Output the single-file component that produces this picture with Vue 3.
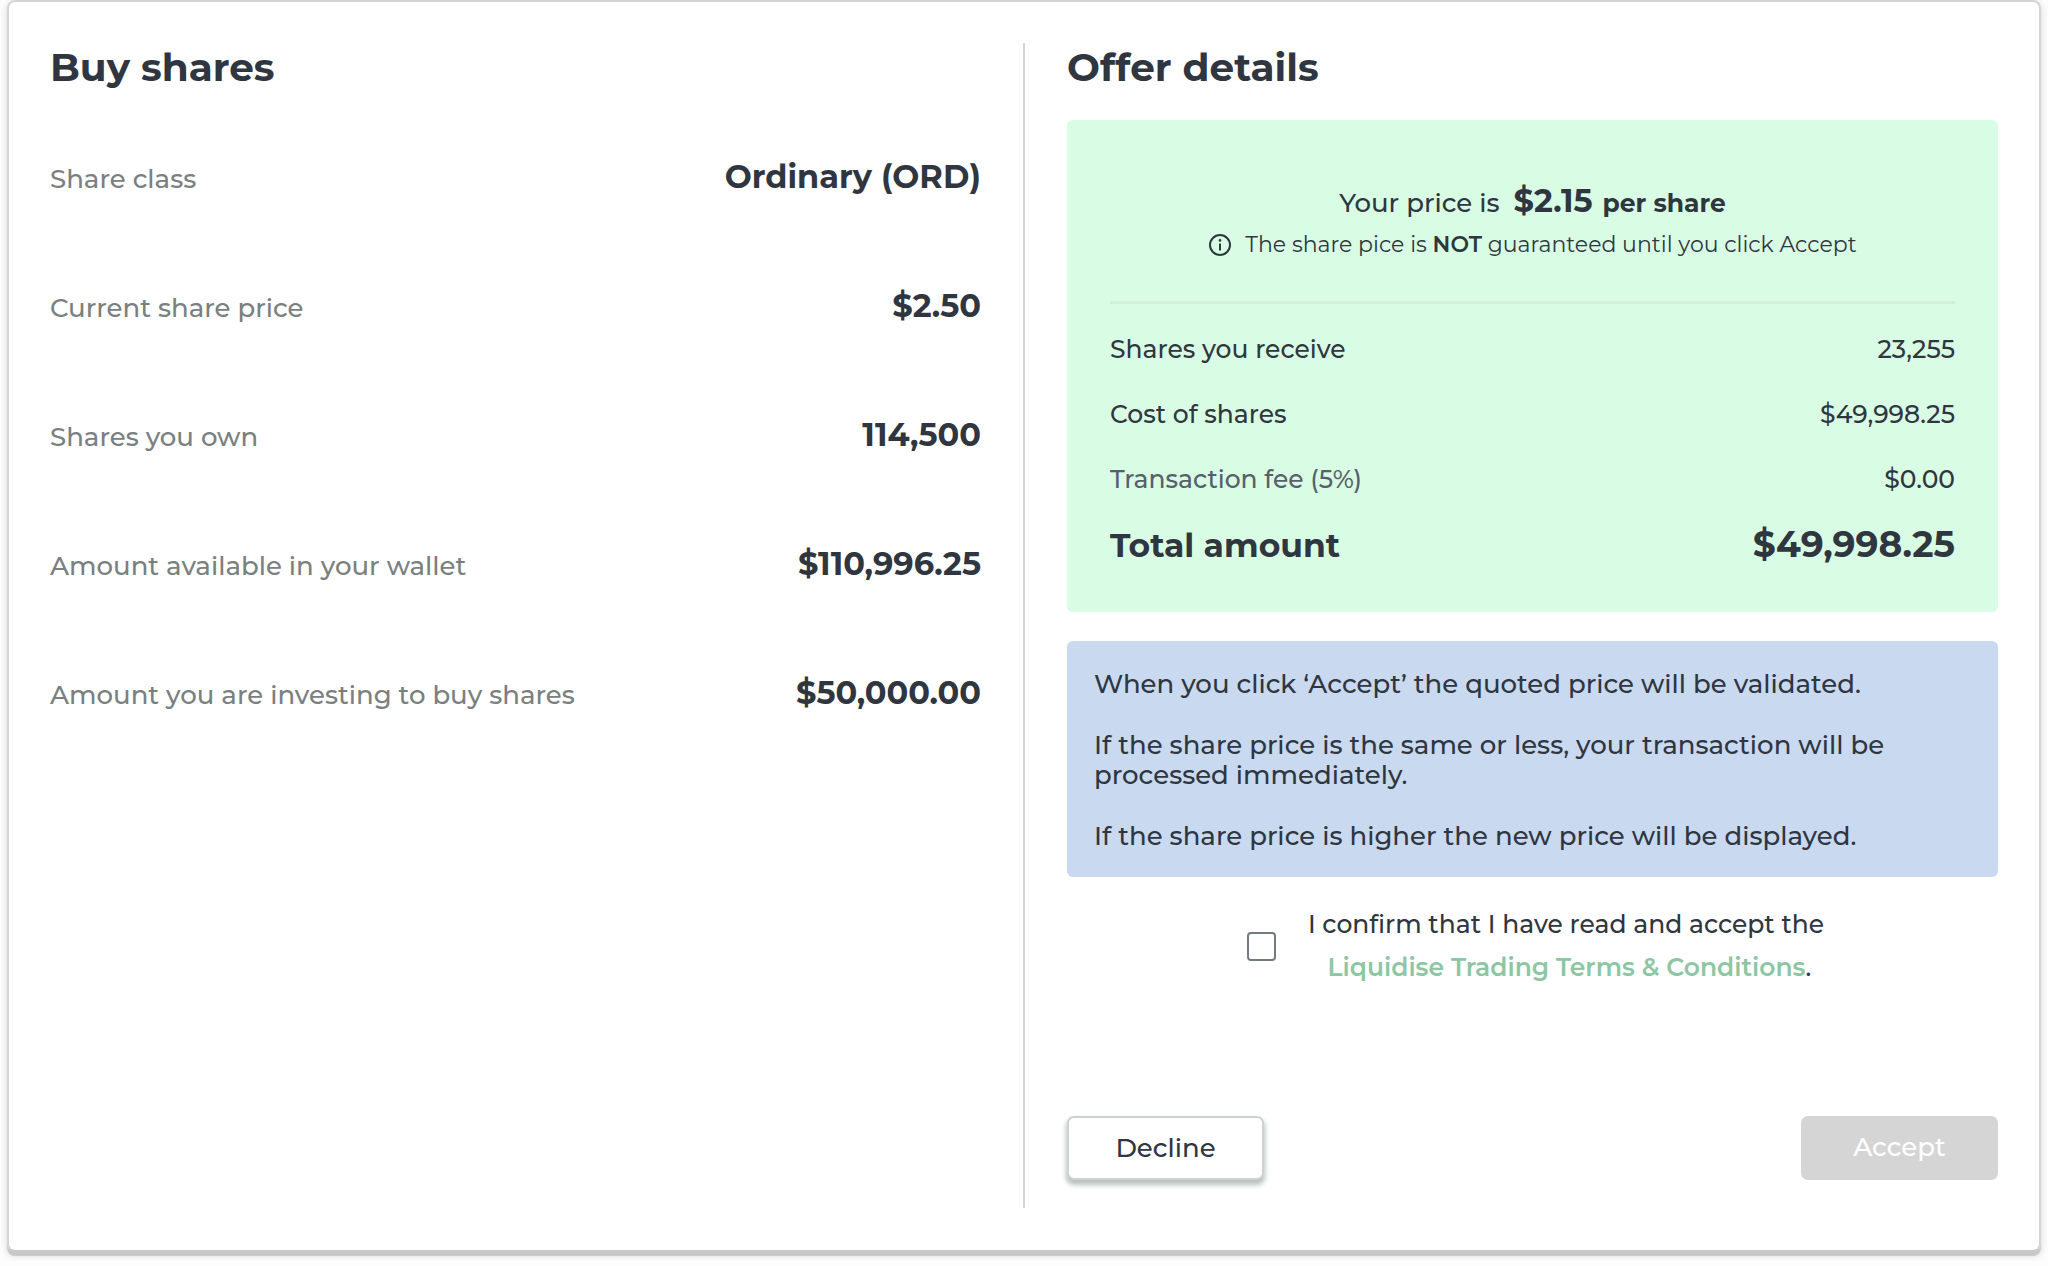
<script setup>
import { ref } from 'vue'

const accepted = ref(false)

const holdings = [
  { label: 'Share class', value: 'Ordinary (ORD)' },
  { label: 'Current share price', value: '$2.50' },
  { label: 'Shares you own', value: '114,500' },
  { label: 'Amount available in your wallet', value: '$110,996.25' },
  { label: 'Amount you are investing to buy shares', value: '$50,000.00' },
]

const quote = [
  { label: 'Shares you receive', value: '23,255' },
  { label: 'Cost of shares', value: '$49,998.25' },
  { label: 'Transaction fee (5%)', value: '$0.00', muted: true },
  { label: 'Total amount', value: '$49,998.25', total: true },
]
</script>

<template>
  <main class="card">
    <section class="column">
      <h1 class="title">Buy shares</h1>
      <dl class="holdings">
        <div v-for="item in holdings" :key="item.label" class="holding">
          <dt>{{ item.label }}</dt>
          <dd>{{ item.value }}</dd>
        </div>
      </dl>
    </section>

    <div class="divider"></div>

    <section class="column offer">
      <h2 class="title">Offer details</h2>

      <div class="quote">
        <p class="price">
          <span class="lead">Your price is</span>
          <strong class="amount">$2.15</strong>
          <strong class="unit">per share</strong>
        </p>
        <p class="note">
          <svg class="info" viewBox="0 0 24 24" aria-hidden="true">
            <circle cx="12" cy="12" r="10" fill="none" stroke="currentColor" stroke-width="2" />
            <path d="M12 10.5v7" fill="none" stroke="currentColor" stroke-width="2" />
            <circle cx="12" cy="7.4" r="1.3" fill="currentColor" />
          </svg>
          <span>The share pice is <b>NOT</b> guaranteed until you click Accept</span>
        </p>
        <dl class="lines">
          <div
            v-for="line in quote"
            :key="line.label"
            class="line"
            :class="{ muted: line.muted, total: line.total }"
          >
            <dt>{{ line.label }}</dt>
            <dd>{{ line.value }}</dd>
          </div>
        </dl>
      </div>

      <div class="notice">
        <p>When you click ‘Accept’ the quoted price will be validated.</p>
        <p>If the share price is the same or less, your transaction will be processed immediately.</p>
        <p>If the share price is higher the new price will be displayed.</p>
      </div>

      <div class="confirm">
        <input id="terms" v-model="accepted" type="checkbox" />
        <label for="terms">
          I confirm that I have read and accept the<br />
          &nbsp;<a href="#terms">Liquidise Trading Terms &amp; Conditions</a>.
        </label>
      </div>

      <div class="actions">
        <button type="button" class="decline">Decline</button>
        <button type="button" class="accept" :disabled="!accepted">Accept</button>
      </div>
    </section>
  </main>
</template>

<style>
body {
  margin: 0;
  background: #fdfdfd;
}
</style>

<style scoped>
.card {
  display: grid;
  grid-template-columns: 1fr 2px 1fr;
  column-gap: 42px;
  margin: 0 7px 12px;
  padding: 41px 41px 42px;
  border: 2px solid #d5d5d5;
  border-bottom-color: #c8c8c8;
  border-radius: 8px;
  background: #fff;
  box-shadow: 0 4px 1px #c8c8c8, 0 3px 5px 3px #ececec;
  color: #2f3640;
  font-family: Montserrat, Inter, "Open Sans", sans-serif;
  font-size: 26px;
  font-weight: 500;
}

.title {
  margin: 0;
  font-size: 39px;
  line-height: 48px;
  font-weight: 700;
}

.divider {
  background: #d5d5d5;
}

dl,
dd,
p {
  margin: 0;
}

.holdings {
  display: flex;
  flex-direction: column;
  gap: 89px;
  margin-top: 66px;
}

.holding,
.line {
  display: flex;
  align-items: baseline;
  justify-content: space-between;
}

.holding {
  height: 40px;
  line-height: 40px;
}

.holding dt {
  color: #7a8080;
}

.holding dd {
  font-size: 32px;
  font-weight: 700;
}

.offer {
  padding-bottom: 28px;
}

.quote {
  margin-top: 29px;
  padding: 60px 43px 35px;
  border-radius: 6px;
  background: #d9fde4;
}

.price {
  display: flex;
  align-items: baseline;
  justify-content: center;
  height: 42px;
  line-height: 42px;
}

.amount {
  margin: 0 10px 0 14px;
  font-size: 32px;
  font-weight: 700;
}

.unit {
  font-size: 25px;
  font-weight: 700;
}

.note {
  display: flex;
  align-items: center;
  justify-content: center;
  gap: 13px;
  padding-bottom: 34px;
  border-bottom: 3px solid #d3efdc;
  font-size: 22px;
  line-height: 45px;
  font-weight: 400;
}

.note b {
  font-weight: 600;
}

.info {
  width: 24px;
  height: 24px;
}

.lines {
  padding-top: 13px;
  font-size: 25px;
}

.line {
  height: 65px;
  line-height: 65px;
}

.muted dt {
  color: #56606a;
}

.total {
  font-size: 33px;
  font-weight: 700;
}

.total dd {
  font-size: 36px;
}

.notice {
  display: flex;
  flex-direction: column;
  gap: 31px;
  margin-top: 29px;
  padding: 28px 27px 26px;
  border-radius: 6px;
  background: #c9daf0;
  line-height: 30px;
}

.confirm {
  display: flex;
  align-items: center;
  justify-content: center;
  gap: 32px;
  margin-top: 26px;
  padding-left: 6px;
  font-size: 25px;
}

.confirm input {
  appearance: none;
  width: 29px;
  height: 29px;
  margin: 0;
  border: 2px solid #717b80;
  border-radius: 4px;
  background: #fff;
}

.confirm input:checked {
  background: #8cc5a2;
}

.confirm label {
  line-height: 43px;
  text-align: center;
}

.confirm a {
  color: #8cc6a3;
  font-weight: 600;
  text-decoration: none;
}

.actions {
  display: flex;
  justify-content: space-between;
  margin-top: 127px;
}

button {
  width: 197px;
  height: 64px;
  padding: 0;
  border: 2px solid #cfd2d2;
  border-radius: 7px;
  font: inherit;
}

.decline {
  background: #fff;
  color: inherit;
  box-shadow: 0 4px 5px 1px #b9c0c0;
}

.accept {
  padding-bottom: 3px;
  border-color: #d5d5d5;
  background: #d5d5d5;
  color: #fff;
}
</style>
